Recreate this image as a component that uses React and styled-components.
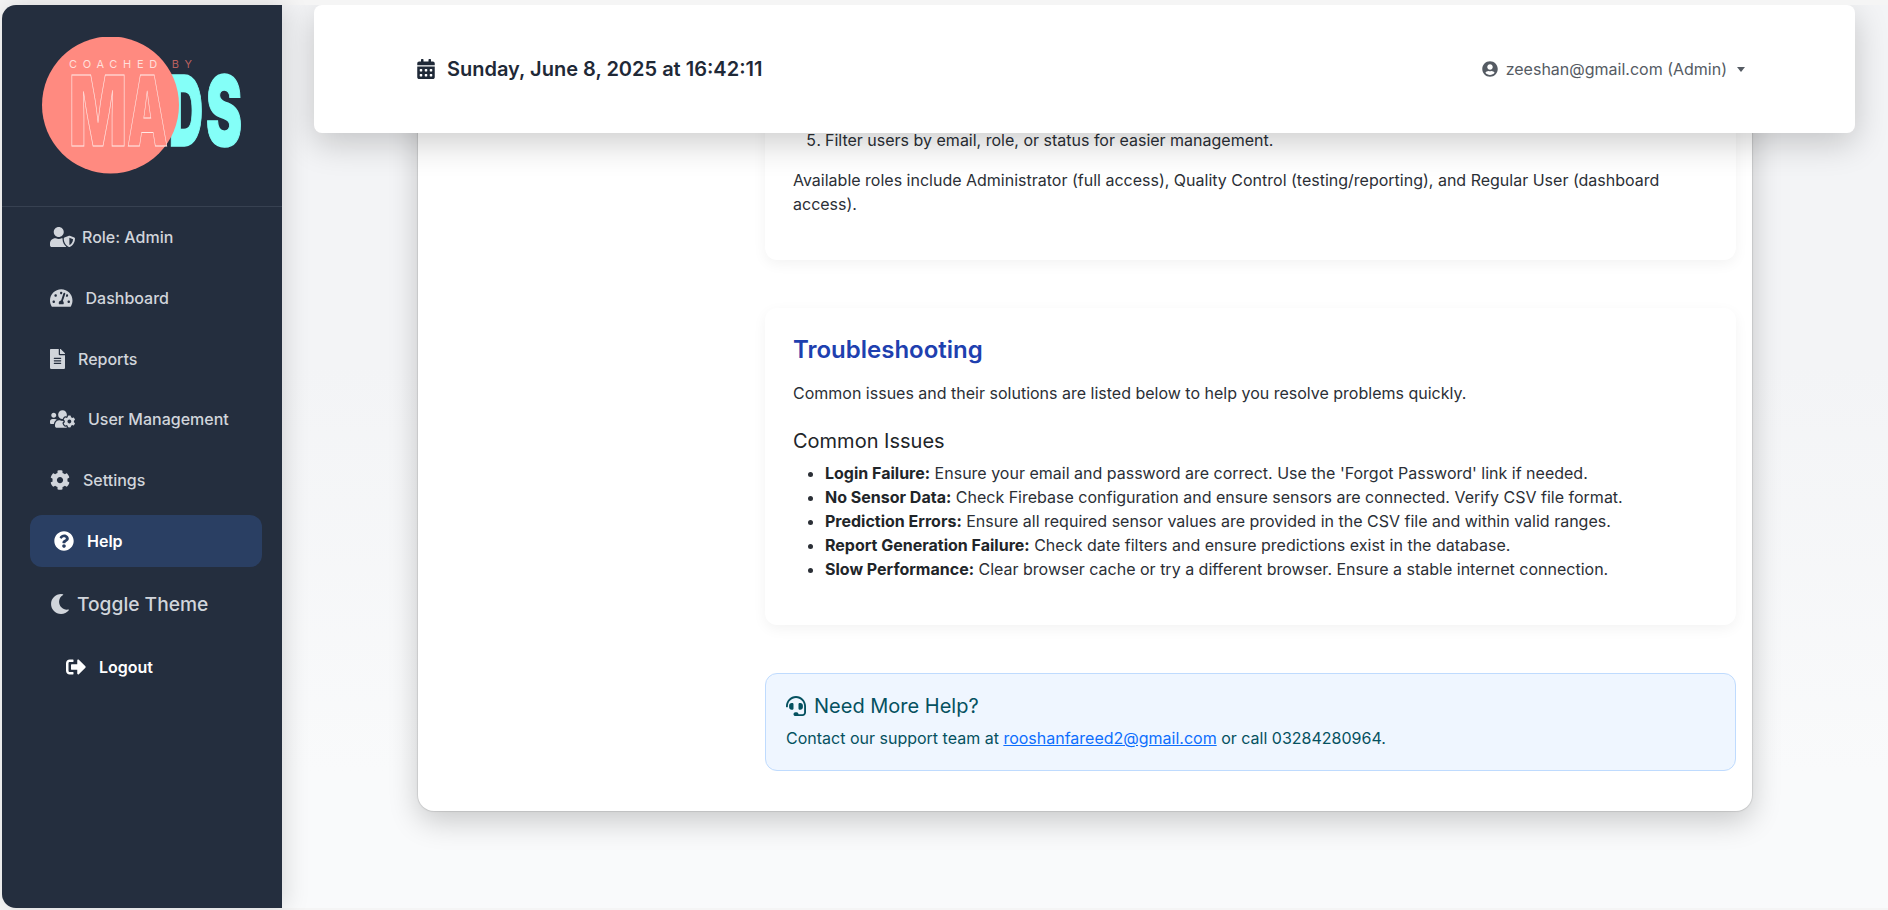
import React from 'react';
import styled, { createGlobalStyle } from 'styled-components';
import {
  FaUserShield, FaTachometerAlt, FaFileAlt, FaUsersCog, FaCog, FaQuestionCircle,
  FaMoon, FaSignOutAlt, FaCalendarAlt, FaUserCircle, FaHeadset,
} from 'react-icons/fa';

const Global = createGlobalStyle`
  html, body { margin: 0; padding: 0; background: #f5f5f5; overflow: hidden; }
  body { font-family: Inter, "Liberation Sans", sans-serif; }
  * { box-sizing: border-box; }
`;

const Frame = styled.div`
  display: flex;
  height: 910px;
  padding: 5px 0 2px 2px;
`;

const Sidebar = styled.aside`
  width: 280px;
  flex-shrink: 0;
  background: #242e3e;
  border-radius: 14px 0 0 14px;
  position: relative;
  z-index: 3;
  box-shadow: 4px 0 24px rgba(0, 0, 0, 0.13);
`;

const LogoBlock = styled.div`
  height: 202px;
  padding: 32px 0 0 38px;
  border-bottom: 1px solid #374151;
`;

const Nav = styled.nav`
  display: flex;
  flex-direction: column;
  gap: 8.8px;
  padding: 4px 20px 0 28px;
`;

const NavRow = styled.div`
  display: flex;
  align-items: center;
  height: 52px;
  padding-left: ${(p) => (p.$active ? '24px' : '20px')};
  gap: ${(p) => p.$gap || 13}px;
  border-radius: 12px;
  font-size: 16px;
  font-weight: ${(p) => (p.$active ? 600 : 500)};
  color: ${(p) => (p.$active ? '#ffffff' : '#d1d5db')};
  background: ${(p) => (p.$active ? '#2a3f63' : 'transparent')};
  svg { width: ${(p) => p.$iconW || 20}px; height: 20px; flex-shrink: 0; }
`;

const ThemeRow = styled.div`
  display: flex;
  align-items: center;
  gap: 7px;
  height: 52px;
  margin-top: 7px;
  padding-left: 20px;
  font-size: 19.2px;
  font-weight: 500;
  color: #d1d5db;
  svg { font-size: 20px; }
`;

const LogoutRow = styled.div`
  display: flex;
  align-items: center;
  gap: 13px;
  height: 52px;
  margin-top: 7px;
  padding-left: 36px;
  font-size: 16px;
  font-weight: 600;
  color: #ffffff;
  svg { font-size: 20px; }
`;

const Main = styled.main`
  flex: 1;
  min-width: 0;
  display: flex;
  flex-direction: column;
  overflow: hidden;
  background: linear-gradient(180deg, #f3f4f6 0%, #f3f4f6 40%, #f9fafb 85%);
`;

const Header = styled.header`
  flex-shrink: 0;
  height: 128px;
  margin: 0 33px 0 32px;
  padding: 0 110px 0 102px;
  display: flex;
  align-items: center;
  justify-content: space-between;
  background: #ffffff;
  border-radius: 8px;
  box-shadow: 0 10px 34px rgba(0, 0, 0, 0.2);
  position: relative;
  z-index: 2;
`;

const DateText = styled.div`
  display: flex;
  align-items: center;
  gap: 11px;
  font-size: 20px;
  font-weight: 600;
  color: #1f2937;
  svg { font-size: 20px; }
`;

const UserMenu = styled.div`
  display: flex;
  align-items: center;
  gap: 8px;
  font-size: 16px;
  color: #555b63;
  svg { font-size: 16px; }
`;

const Caret = styled.span`
  width: 0;
  height: 0;
  margin-left: 2px;
  border-top: 5px solid #555b63;
  border-left: 4.5px solid transparent;
  border-right: 4.5px solid transparent;
`;

const Content = styled.div`
  flex: 1;
  padding: 0 136px;
`;

const Card = styled.div`
  margin-top: -40px;
  padding: 0 16px 40px 347px;
  background: #ffffff;
  border-radius: 0 0 16px 16px;
  box-shadow: 0 10px 30px rgba(0, 0, 0, 0.2), 0 0 1px 1px rgba(0, 0, 0, 0.1);
`;

const Section = styled.section`
  padding: ${(p) => (p.$first ? '35px' : '27px')} 28px 28px;
  margin-bottom: 48px;
  background: #ffffff;
  border-radius: 12px;
  box-shadow: 0 4px 14px rgba(0, 0, 0, 0.05);
`;

const SectionTitle = styled.h2`
  margin: 0 0 17px;
  font-size: 24px;
  line-height: 29px;
  font-weight: 600;
  color: #1e40af;
`;

const Para = styled.p`
  margin: 0 0 16px;
  font-size: 16px;
  line-height: 24px;
  color: #2b2f36;
`;

const SubTitle = styled.h3`
  margin: 24px 0 8px;
  font-size: 20px;
  line-height: 24px;
  font-weight: 400;
  color: #212529;
`;

const Ol = styled.ol`
  margin: 0 0 16px;
  padding-left: 32px;
  font-size: 16px;
  line-height: 24px;
  color: #2b2f36;
`;

const Ul = styled.ul`
  margin: 0 0 16px;
  padding-left: 32px;
  font-size: 16px;
  line-height: 24px;
  color: #2b2f36;
  strong { font-weight: 700; color: #212529; }
`;

const HelpBox = styled.div`
  padding: 20px;
  background: #eff6ff;
  border: 1px solid #bfdbfe;
  border-radius: 12px;
  color: #055160;
`;

const HelpTitle = styled.h3`
  display: flex;
  align-items: center;
  gap: 8px;
  margin: 0 0 8px;
  font-size: 20px;
  line-height: 24px;
  font-weight: 400;
  svg { font-size: 20px; }
`;

const HelpText = styled.p`
  margin: 0;
  font-size: 16px;
  line-height: 24px;
  a { color: #0d6efd; text-decoration: underline; }
`;

const heavy = { fontFamily: 'Inter, sans-serif', fontWeight: 900, fontSize: 98, lengthAdjust: 'spacingAndGlyphs' };

const Logo = () => (
  <svg width="210" height="140" viewBox="0 0 210 140" aria-label="Coached by MADS">
    <text {...heavy} x="129" y="108.5" textLength="34" fill="#84fff8" stroke="#84fff8" strokeWidth="1.5">D</text>
    <text {...heavy} x="166" y="108.5" textLength="36" fill="#84fff8" stroke="#84fff8" strokeWidth="1.5">S</text>
    <circle cx="70.5" cy="68" r="68.5" fill="#ff8a80" />
    <text x="29" y="30.5" fontFamily="Inter, sans-serif" fontWeight="400" fontSize="11" textLength="123">
      <tspan fill="#ffdfda">COACHED </tspan><tspan fill="#b9605f">BY</tspan>
    </text>
    <text {...heavy} x="29" y="109" textLength="58" fill="#ff8a80" stroke="#ffe9e6" strokeWidth="0.9">M</text>
    <text {...heavy} x="87" y="109" textLength="41" fill="#ff8a80" stroke="#ffe9e6" strokeWidth="0.9">A</text>
  </svg>
);

const items = [
  { icon: <FaUserShield />, label: 'Role: Admin', gap: 7, w: 25 },
  { icon: <FaTachometerAlt />, label: 'Dashboard', w: 22.5 },
  { icon: <FaFileAlt />, label: 'Reports', w: 15 },
  { icon: <FaUsersCog />, label: 'User Management', w: 25 },
  { icon: <FaCog />, label: 'Settings' },
  { icon: <FaQuestionCircle />, label: 'Help', active: true },
];

const issues = [
  ['Login Failure:', " Ensure your email and password are correct. Use the 'Forgot Password' link if needed."],
  ['No Sensor Data:', ' Check Firebase configuration and ensure sensors are connected. Verify CSV file format.'],
  ['Prediction Errors:', ' Ensure all required sensor values are provided in the CSV file and within valid ranges.'],
  ['Report Generation Failure:', ' Check date filters and ensure predictions exist in the database.'],
  ['Slow Performance:', ' Clear browser cache or try a different browser. Ensure a stable internet connection.'],
];

export default function App() {
  return (
    <>
      <Global />
      <Frame>
        <Sidebar>
          <LogoBlock><Logo /></LogoBlock>
          <Nav>
            {items.map((it) => (
              <NavRow key={it.label} $active={it.active} $gap={it.gap} $iconW={it.w}>
                {it.icon}<span>{it.label}</span>
              </NavRow>
            ))}
          </Nav>
          <Nav>
            <ThemeRow><FaMoon /><span>Toggle Theme</span></ThemeRow>
          </Nav>
          <Nav>
            <LogoutRow><FaSignOutAlt /><span>Logout</span></LogoutRow>
          </Nav>
        </Sidebar>
        <Main>
          <Header>
            <DateText><FaCalendarAlt /><span>Sunday, June 8, 2025 at 16:42:11</span></DateText>
            <UserMenu><FaUserCircle /><span>zeeshan@gmail.com (Admin)</span><Caret /></UserMenu>
          </Header>
          <Content>
            <Card>
              <Section $first>
                <Ol start={5}>
                  <li>Filter users by email, role, or status for easier management.</li>
                </Ol>
                <Para>Available roles include Administrator (full access), Quality Control (testing/reporting), and Regular User (dashboard access).</Para>
              </Section>
              <Section>
                <SectionTitle>Troubleshooting</SectionTitle>
                <Para>Common issues and their solutions are listed below to help you resolve problems quickly.</Para>
                <SubTitle>Common Issues</SubTitle>
                <Ul>
                  {issues.map(([a, b]) => (
                    <li key={a}><strong>{a}</strong>{b}</li>
                  ))}
                </Ul>
              </Section>
              <HelpBox>
                <HelpTitle><FaHeadset /><span>Need More Help?</span></HelpTitle>
                <HelpText>Contact our support team at <a href="#support">rooshanfareed2@gmail.com</a> or call 03284280964.</HelpText>
              </HelpBox>
            </Card>
          </Content>
        </Main>
      </Frame>
    </>
  );
}
